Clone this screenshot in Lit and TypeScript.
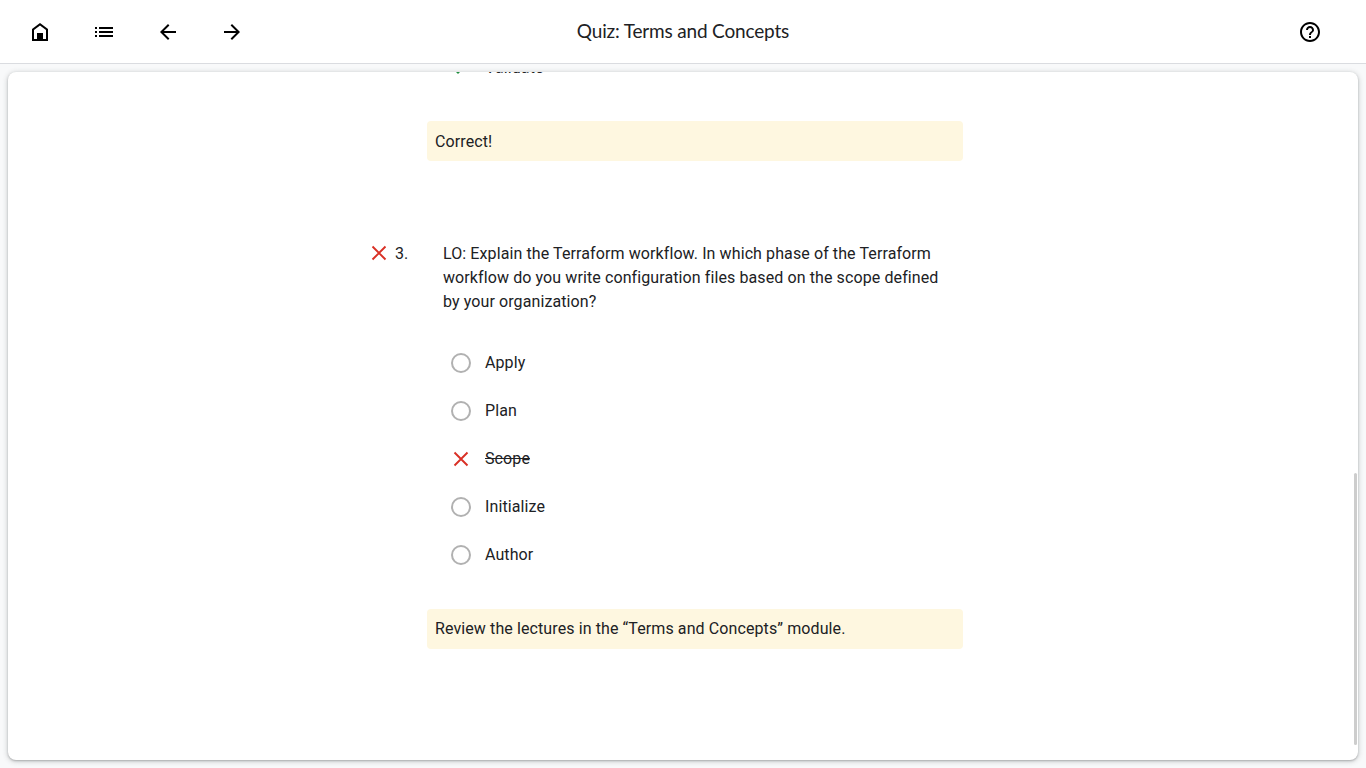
import { LitElement, html, css, svg, nothing } from "lit";
import { customElement, property } from "lit/decorators.js";

const icons: Record<string, unknown> = {
  home: svg`<path fill-rule="evenodd" d="M12 3 4 9v12h16V9l-8-6Zm6 16H6v-9l6-4.5 6 4.5v9Z"/><path d="M9 13h6v7H9z"/>`,
  list: svg`<path d="M3 7h2v2H3zM3 11h2v2H3zM3 15h2v2H3zM7 7h14v2H7zM7 11h14v2H7zM7 15h14v2H7z"/>`,
  back: svg`<path d="M20 11H7.83l5.59-5.59L12 4l-8 8 8 8 1.41-1.41L7.83 13H20v-2Z"/>`,
  forward: svg`<path d="m12 4-1.41 1.41L16.17 11H4v2h12.17l-5.58 5.59L12 20l8-8-8-8Z"/>`,
  help: svg`<path d="M11 18h2v-2h-2v2Zm1-16C6.48 2 2 6.48 2 12s4.48 10 10 10 10-4.48 10-10S17.52 2 12 2Zm0 18c-4.41 0-8-3.59-8-8s3.59-8 8-8 8 3.59 8 8-3.59 8-8 8Zm0-14c-2.21 0-4 1.79-4 4h2c0-1.1.9-2 2-2s2 .9 2 2c0 2-3 1.75-3 5h2c0-2.25 3-2.5 3-5 0-2.21-1.79-4-4-4Z"/>`,
  cross: svg`<path d="m5.5 5.5 13 13m0-13-13 13" fill="none" stroke="#d93025" stroke-width="1.9"/>`,
  check: svg`<path d="M9 16.17 4.83 12l-1.42 1.41L9 19 21 7l-1.41-1.41L9 16.17Z" fill="#1e8e3e"/>`,
};

@customElement("quiz-icon")
class QuizIcon extends LitElement {
  @property() name = "";
  static styles = css`
    :host { display: block; width: 24px; height: 24px; flex: none; }
    svg { display: block; width: 100%; height: 100%; }
  `;
  render() {
    return html`<svg viewBox="0 0 24 24">${icons[this.name] ?? nothing}</svg>`;
  }
}

type Mark = "none" | "wrong" | "right";

@customElement("quiz-option")
class QuizOption extends LitElement {
  @property() label = "";
  @property() mark: Mark = "none";
  static styles = css`
    :host { display: block; }
    .row { display: flex; align-items: center; height: 48px; }
    .control { width: 36px; display: flex; justify-content: center; flex: none; }
    .radio { width: 20px; height: 20px; box-sizing: border-box; border: 2px solid #b1b1b1; border-radius: 50%; }
    .label { margin-left: 6px; padding-bottom: 1px; line-height: 24px; }
    .wrong { text-decoration: line-through; }
    .right { padding: 1px 0 0; }
  `;
  render() {
    const control =
      this.mark === "wrong" ? html`<quiz-icon name="cross"></quiz-icon>`
      : this.mark === "right" ? html`<quiz-icon name="check"></quiz-icon>`
      : html`<span class="radio"></span>`;
    return html`<div class="row">
      <span class="control">${control}</span>
      <span class="label ${this.mark}">${this.label}</span>
    </div>`;
  }
}

@customElement("app-root")
class AppRoot extends LitElement {
  static styles = css`
    :host {
      display: flex; flex-direction: column; height: 100vh;
      background: #f8f9fa; color: #202124;
      font: 16px/24px Roboto, sans-serif; letter-spacing: .1px;
    }
    .bar {
      display: grid; grid-template-columns: 1fr auto 1fr; align-items: center;
      height: 64px; box-sizing: border-box; flex: none;
      padding: 0 44px 0 28px; background: #fff; border-bottom: 1px solid #dadce0; color: #000;
    }
    .nav { display: flex; gap: 40px; }
    .help { justify-self: end; }
    .title {
      margin: 0; padding: 0 0 2px 16px; font: 400 19px/24px Lato, sans-serif;
      letter-spacing: -.17px; color: #202124; white-space: nowrap;
    }
    .card {
      flex: 1; min-height: 0; margin: 8px; display: flex; justify-content: space-between;
      background: #fff; border-radius: 8px; overflow: hidden;
      box-shadow: 0 1px 2px rgba(60, 64, 67, .3), 0 1px 5px 1px rgba(60, 64, 67, .2);
    }
    .content { width: 596px; margin-left: 359px; }
    .options { margin-left: 76px; }
    .previous { margin-top: -29px; }
    .feedback {
      margin: 30px 0 0 60px; padding: 8px; border-radius: 4px; background: #fef7e0;
    }
    .correct { padding: 9px 8px 7px; }
    .question { display: flex; margin: 80px 0 25px; }
    .number { width: 48px; margin: 1px 0 0 4px; flex: none; }
    .prompt { margin: 1px 0 0; width: 504px; flex: none; }
    .thumb {
      align-self: flex-end; width: 3px; height: 272px; margin: 0 1px 15px 0;
      border-radius: 2px; background: #cdcdcd;
    }
  `;
  private options: { label: string; mark: Mark }[] = [
    { label: "Apply", mark: "none" },
    { label: "Plan", mark: "none" },
    { label: "Scope", mark: "wrong" },
    { label: "Initialize", mark: "none" },
    { label: "Author", mark: "none" },
  ];
  render() {
    return html`
      <header class="bar">
        <nav class="nav">
          ${["home", "list", "back", "forward"].map((n) => html`<quiz-icon name=${n}></quiz-icon>`)}
        </nav>
        <h1 class="title">Quiz: Terms and Concepts</h1>
        <quiz-icon class="help" name="help"></quiz-icon>
      </header>
      <main class="card">
        <div class="content">
          <div class="options previous"><quiz-option label="Validate" mark="right"></quiz-option></div>
          <div class="feedback correct">Correct!</div>
          <div class="question">
            <quiz-icon name="cross"></quiz-icon>
            <span class="number">3.</span>
            <p class="prompt">LO: Explain the Terraform workflow. In which phase of the Terraform workflow do you write configuration files based on the scope defined by your organization?</p>
          </div>
          <div class="options">
            ${this.options.map((o) => html`<quiz-option label=${o.label} mark=${o.mark}></quiz-option>`)}
          </div>
          <div class="feedback">Review the lectures in the “Terms and Concepts” module.</div>
        </div>
        <div class="thumb"></div>
      </main>
    `;
  }
}
